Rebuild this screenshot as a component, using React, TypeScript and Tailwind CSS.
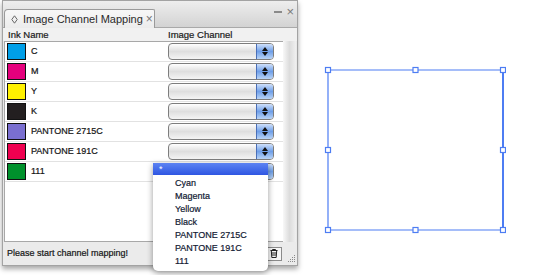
import React from "react";

const rows = [
  { name: "C", color: "#009fe8" },
  { name: "M", color: "#e5007d" },
  { name: "Y", color: "#fff100" },
  { name: "K", color: "#231f20" },
  { name: "PANTONE 2715C", color: "#7a6fd0" },
  { name: "PANTONE 191C", color: "#ef0050" },
  { name: "111", color: "#00912c" },
];

const menuItems = ["Cyan", "Magenta", "Yellow", "Black", "PANTONE 2715C", "PANTONE 191C", "111"];

function Select() {
  return (
    <div className="w-[106px] h-[17px] flex rounded-[4px] border border-[#7d7d7d] overflow-hidden bg-gradient-to-b from-[#ffffff] via-[#dedede] to-[#f4f4f4]">
      <div className="flex-1" />
      <div className="w-[17px] h-full flex flex-col items-center justify-center gap-[1px] border-l border-[#4a6fb8] bg-gradient-to-b from-[#cfe0fa] via-[#6f9fe8] to-[#b9d4f6]">
        <svg width="6" height="4" viewBox="0 0 6 4"><path d="M3 0 L6 4 L0 4 Z" fill="#111" /></svg>
        <svg width="6" height="4" viewBox="0 0 6 4"><path d="M0 0 L6 0 L3 4 Z" fill="#111" /></svg>
      </div>
    </div>
  );
}

export default function App() {
  return (
    <div className="w-[543px] h-[275px] bg-white flex items-start font-['Liberation_Sans',Arial,sans-serif] text-[#151515] overflow-hidden">
      {/* Panel */}
      <div className="ml-[2px] w-[296px] h-[266px] relative flex flex-col bg-[#e9e9e9] border border-[#a3a3a3] shadow-[0_3px_5px_rgba(0,0,0,0.35)]">
        {/* Title bar */}
        <div className="h-[27px] flex items-end bg-gradient-to-b from-[#eeeeee] to-[#d3d3d3] border-b border-[#a9a9a9]">
          <div className="ml-[1px] h-[19px] w-[151px] flex items-center bg-gradient-to-b from-[#f7f7f7] to-[#ececec] border border-b-0 border-[#9a9a9a] rounded-tl-[4px] rounded-tr-[2px] -mb-[1px]">
            <svg className="ml-[6px]" width="7" height="9" viewBox="0 0 7 9">
              <path d="M3.5 0.8 L6.2 4.5 L3.5 8.2 L0.8 4.5 Z" fill="none" stroke="#666" strokeWidth="1" />
            </svg>
            <span className="ml-[5px] text-[11px] leading-none text-[#2a2a2a]">Image Channel Mapping</span>
            <span className="ml-[3px] text-[12px] leading-none text-[#777]">×</span>
          </div>
          <div className="ml-auto self-start mt-[4px] mr-[3px] flex items-center gap-[4px] text-[#7a7a7a]">
            <span className="block w-[8px] h-[2px] bg-[#8a8a8a] mt-[1px]" />
            <span className="text-[13px] leading-none">×</span>
          </div>
        </div>
        {/* Header row */}
        <div className="h-[13px] flex items-center bg-[#f1f1f1] text-[9.5px] leading-none text-[#1a1a1a] [-webkit-text-stroke:0.2px_#1a1a1a]">
          <span className="ml-[5px] w-[160px]">Ink Name</span>
          <span>Image Channel</span>
        </div>
        {/* List + scrollbar */}
        <div className="flex h-[201px]">
          <div className="ml-[1px] w-[279px] bg-white border-l border-t border-b border-[#a8a8a8]">
            {rows.map((r) => (
              <div key={r.name} className="h-[20px] flex items-center border-b border-[#e2e2e2]">
                <div className="w-[163px] flex items-center pl-[2px]">
                  <div className="w-[19px] h-[17px] border border-[#111]" style={{ backgroundColor: r.color }} />
                  <span className="ml-[5px] text-[9px] leading-none text-[#141414] [-webkit-text-stroke:0.2px_#141414]">{r.name}</span>
                </div>
                <Select />
              </div>
            ))}
          </div>
          <div className="w-[13px] bg-gradient-to-r from-[#f8f8f8] via-[#dcdcdc] to-[#f0f0f0]" />
        </div>
        {/* Status bar */}
        <div className="flex-1 flex items-center bg-[#ebebeb] relative">
          <span className="ml-[4px] text-[9px] leading-none text-[#151515] [-webkit-text-stroke:0.2px_#151515]">Please start channel mapping!</span>
          <div className="ml-auto mr-[15px] w-[17px] h-[14px] border border-[#8a8a8a] bg-[#f6f6f6] flex items-center justify-center">
            <svg width="8" height="9" viewBox="0 0 8 9">
              <path d="M0.5 1.5 H7.5 M2.5 1.5 V0.5 H5.5 V1.5 M1.3 1.5 L1.8 8.5 H6.2 L6.7 1.5 M3 3 V7 M5 3 V7" fill="none" stroke="#222" strokeWidth="1" />
            </svg>
          </div>
          <svg className="absolute right-[1px] bottom-[2px]" width="9" height="9" viewBox="0 0 9 9">
            <g fill="#8a8a8a">
              <rect x="7" y="1" width="1" height="1" />
              <rect x="5" y="3" width="1" height="1" />
              <rect x="7" y="3" width="1" height="1" />
              <rect x="3" y="5" width="1" height="1" />
              <rect x="5" y="5" width="1" height="1" />
              <rect x="7" y="5" width="1" height="1" />
              <rect x="1" y="7" width="1" height="1" />
              <rect x="3" y="7" width="1" height="1" />
              <rect x="5" y="7" width="1" height="1" />
              <rect x="7" y="7" width="1" height="1" />
            </g>
          </svg>
        </div>

        {/* Dropdown menu overlay */}
        <div className="absolute left-[150px] top-[162px] w-[115px] bg-white rounded-b-[5px] shadow-[0_2px_6px_rgba(0,0,0,0.4)] pb-[3px] z-10">
          <div className="h-[12px] flex items-center bg-gradient-to-b from-[#5d83f2] to-[#2f55e2] pl-[6px]">
            <span className="text-[9px] leading-none text-white">*</span>
          </div>
          <div className="pt-[2px]">
            {menuItems.map((m) => (
              <div key={m} className="h-[13px] flex items-center pl-[22px] text-[9px] leading-none text-[#121a33] [-webkit-text-stroke:0.2px_#121a33]">
                {m}
              </div>
            ))}
          </div>
        </div>
      </div>

      {/* Canvas selection rectangle */}
      <svg className="ml-[26px] mt-[66px]" width="182" height="168" viewBox="0 0 182 168">
        <g stroke="#4d7df3" fill="none">
          <path d="M4 4 H179 M4 164 H179 M4 4 V164" strokeWidth="1.2" />
          <path d="M179 4 V164" strokeWidth="2" />
        </g>
        <g fill="white" stroke="#4d7df3" strokeWidth="1.2">
          {[
            [4, 4], [91.5, 4], [179, 4],
            [4, 84], [179, 84],
            [4, 164], [91.5, 164], [179, 164],
          ].map(([x, y], i) => (
            <rect key={i} x={x - 2.5} y={y - 2.5} width="5" height="5" />
          ))}
        </g>
      </svg>
    </div>
  );
}
